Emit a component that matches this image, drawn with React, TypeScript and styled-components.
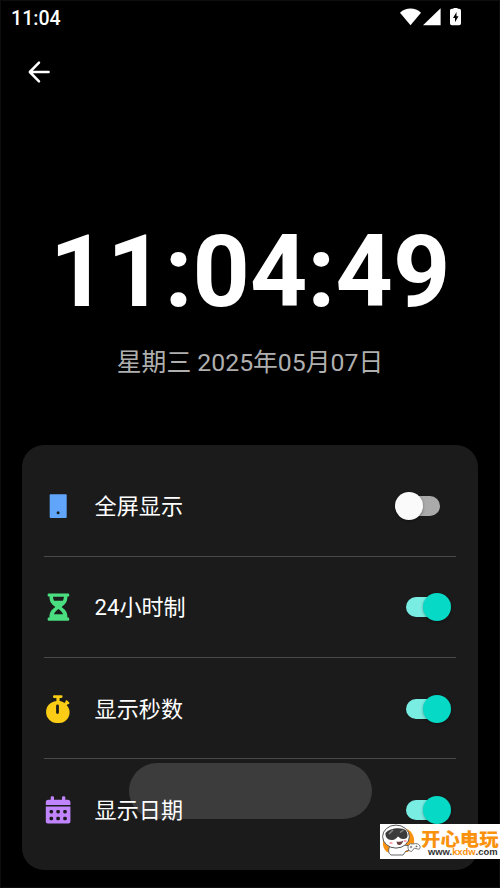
import React, { useState } from "react";
import styled, { createGlobalStyle } from "styled-components";

const GlobalStyle = createGlobalStyle`
  * { box-sizing: border-box; }
  body { margin: 0; background: #000; }
`;

const Screen = styled.main`
  position: relative;
  width: 500px;
  height: 888px;
  overflow: hidden;
  display: flex;
  flex-direction: column;
  box-shadow: inset 0 0 0 1px #0d0d0d;
  background: #000;
  color: #fff;
  font-family: Roboto, "Noto Sans CJK SC", sans-serif;
`;

const StatusBar = styled.header`
  display: flex;
  align-items: center;
  justify-content: space-between;
  height: 34px;
  padding: 1px 38px 0 11px;
`;

const StatusTime = styled.span`
  font-size: 19.6px;
  line-height: 33px;
  padding-top: 1px;
  font-weight: 500;
`;

const StatusIcons = styled.div`
  display: flex;
  height: 19px;
`;

const NavBar = styled.nav`
  display: flex;
  align-items: center;
  height: 76px;
  padding-left: 27px;
`;

const BackButton = styled.button`
  display: flex;
  padding: 0;
  border: 0;
  background: none;
  color: #fff;
`;

const Clock = styled.section`
  display: flex;
  flex-direction: column;
  align-items: center;
  height: 334.5px;
  padding-top: 102px;
`;

const Time = styled.h1`
  margin: 0;
  font-size: 100px;
  line-height: 120px;
  font-weight: 700;
`;

const DateLine = styled.p`
  margin: 13px 0 0;
  font-size: 24.8px;
  line-height: 36px;
  color: #afafaf;
  white-space: nowrap;
`;

const Card = styled.section`
  position: relative;
  isolation: isolate;
  width: 455.5px;
  height: 425.5px;
  margin-left: 22px;
  padding: 11px 22px;
  border-radius: 22px;
  background: #1b1b1b;
`;

const Row = styled.label`
  display: flex;
  align-items: center;
  height: 101.3px;
  padding: 1px 5px 0 0;
  border-bottom: 1.3px solid #4a4a4a;
  &:last-of-type {
    height: 99.5px;
    border-bottom: 0;
  }
`;

const IconSlot = styled.span`
  display: flex;
  justify-content: center;
  width: 28px;
  margin-right: 22.6px;
`;

const Label = styled.span`
  flex: 1;
  font-size: 22.1px;
  line-height: 32px;
`;

const Track = styled.span<{ $on: boolean }>`
  position: relative;
  width: 55.4px;
  height: 28px;
  display: flex;
  align-items: center;
  &::before {
    content: "";
    width: 34px;
    height: 20px;
    margin-left: 11px;
    border-radius: 10px;
    background: ${(p) => (p.$on ? "#7aede2" : "#aaa")};
  }
`;

const Thumb = styled.span<{ $on: boolean }>`
  position: absolute;
  top: 0;
  left: ${(p) => (p.$on ? "27.4px" : "0")};
  width: 28px;
  height: 28px;
  border-radius: 50%;
  background: ${(p) => (p.$on ? "#06d9c5" : "#fafafa")};
  box-shadow: 0 1px 3px rgba(0, 0, 0, 0.35);
`;

const HiddenCheckbox = styled.input`
  position: absolute;
  opacity: 0;
  pointer-events: none;
`;

const Toast = styled.div`
  position: absolute;
  z-index: -1;
  left: 106.5px;
  top: 318.5px;
  width: 243px;
  height: 56px;
  border-radius: 28px;
  background: #3c3c3c;
`;

const Badge = styled.aside`
  position: absolute;
  right: 0;
  bottom: 29px;
  display: flex;
  width: 120px;
  height: 35px;
  background: #fff;
`;

const BadgeText = styled.div`
  display: flex;
  flex-direction: column;
  width: 79px;
`;

const BadgeName = styled.span`
  height: 19px;
  margin-top: 4px;
  font: 900 19.4px/19px "Noto Sans CJK SC", sans-serif;
  color: #f9920e;
  white-space: nowrap;
  transform: scaleY(0.95);
`;

const BadgeUrl = styled.span`
  height: 9px;
  margin-left: 7px;
  font: 700 9.4px/9px "Liberation Sans", sans-serif;
  color: #333;
  white-space: nowrap;
  & b { color: #f9920e; }
`;

const BackIcon = () => (
  <svg width="26" height="26" viewBox="0 0 26 26" fill="none" stroke="currentColor" strokeWidth="2.5" strokeLinecap="round" strokeLinejoin="round">
    <path d="M21.6 13H3M12 3.7 2.8 13 12 22.3" />
  </svg>
);

const SignalIcons = () => (
  <svg width="62" height="19" viewBox="0 0 62 19" fill="#fff">
    <path d="M0 4.7C6-.8 15-.8 21 4.7L10.5 17.2Z" />
    <path d="M40.6.2v17H23Z" />
    <path fillRule="evenodd" d="M53.5-.8h4v1.6H59c1.3 0 2 .7 2 2v12.5c0 1.3-.7 2-2 2h-7c-1.3 0-2-.7-2-2V2.8c0-1.3.7-2 2-2h1.5Zm3 4.8-3.5 6h2v4.2l3.5-6h-2Z" />
  </svg>
);

const PhoneIcon = () => (
  <svg width="28" height="28" viewBox="0 0 28 28">
    <rect x="5.7" y="2.2" width="17" height="23.7" rx="1" fill="#60a5fa" />
    <circle cx="14.1" cy="20.7" r="1.5" fill="#1b1b1b" />
  </svg>
);

const HourglassIcon = () => (
  <svg width="28" height="28" viewBox="0 0 28 28">
    <path fill="#4ade80" fillRule="evenodd" d="M4.7.5h19.5q1 0 1 1v1.2q0 .9-1 .9h-.8c0 5-1.6 7.2-5.8 10.5 4.2 3.2 5.8 5.4 5.8 10.3h.8q1 0 1 1v1.3q0 1-1 1H4.7q-1 0-1-1v-1.3q0-1 1-1h.8c0-4.9 1.6-7.1 5.8-10.3C7.1 10.8 5.5 8.6 5.5 3.6h-.8q-1 0-1-.9V1.5q0-1 1-1ZM9 3.8c.1 1.8.4 2.8 1.1 4h8.7c.7-1.2 1-2.2 1.1-4Zm.9 17.4h9.2c-.9-2.1-2.2-3.5-4.6-5.3-2.4 1.8-3.7 3.2-4.6 5.3Z" />
  </svg>
);

const StopwatchIcon = () => (
  <svg width="28" height="28" viewBox="0 0 28 28">
    <path fill="#facc15" fillRule="evenodd" d="M10.3.2h7.1q1.2 0 1.2 1.4t-1.2 1.5h-1.8v3c2 .3 3.5.9 4.8 1.8l1.2-1.1c-.7-.9.8-2 1.6-1.2l2 1.9c.8.8-.4 2.2-1.4 1.5l-1.1 1.2c1.9 2.1 2.9 4.1 2.9 7 0 3.8-1.3 6.3-4.1 8.5-1.8 1.5-3.6 2.2-5.9 2.2h-3.4c-2.5 0-4.7-1-6.7-2.9-2.2-2.2-3.4-4.4-3.4-7.7 0-6.4 4.3-10.4 10.3-11.2v-3h-2.1Q9 3.1 9 1.6T10.3.2ZM12.1 11q-.1-1.4 1.4-1.4t1.4 1.4v6.6q0 1.4-1.4 1.4t-1.4-1.4Z" />
  </svg>
);

const CalendarIcon = () => (
  <svg width="28" height="28" viewBox="0 0 28 28" fill="#c084fc">
    <path d="M1.8 9V6.2Q1.8 3.7 4.3 3.7h2.4V1.3Q6.7.3 8 .3h.8Q10 .3 10 1.3v2.4h8V1.3q0-1 1.2-1h.8q1.3 0 1.3 1v2.4h2.4q2.7 0 2.7 2.5V9Z" />
    <path fillRule="evenodd" d="M1.8 10.6h24.6v15q0 2-2 2H3.8q-2 0-2-2Z" />
    <g fill="#1b1b1b">
      {[7.3, 14.1, 21].map((x) =>
        [15.7, 22.5].map((y) => <rect key={`${x}-${y}`} x={x - 1.8} y={y - 1.8} width="3.6" height="3.6" rx="1.4" />)
      )}
    </g>
  </svg>
);

const Mascot = () => (
  <svg width="41" height="35" viewBox="0 0 41 35">
    <path d="M23 4c8 1 12 8 11 15l-6 9-16 1-5-1q-5-4-4-11Z" fill="#f9920e" />
    <path d="M10 22c-2 4-2 7 1 9h12l3-4 5-1 1-4-9-1Z" fill="#fff" stroke="#555" strokeWidth=".9" />
    <ellipse cx="16" cy="12.6" rx="13.4" ry="11.5" fill="#fff" stroke="#555" strokeWidth="1" />
    <path d="M5.5 9C9 4 22 2.500 26 6.500c3 5 1.500 8.500-2.500 8.500-3 0-4-1.500-5.500-2.500-2 2-3 3.500-6.500 3.500-4 0-6.500-3-6-7Z" fill="#3b3b3b" />
    <path d="m9 10 4-4M20 8.500l3.500-2.500" stroke="#888" strokeWidth="1.500" />
    <path d="M16.500 17.500q4 1 7-1-2 5-4.500 4.500-2 0-2.500-3.500Z" fill="#6b4040" />
    <path d="M9.500 19h3M24 17h2.500" stroke="#ffa6b3" strokeWidth="1.800" />
    <path d="M28 22q2-3.500 5-2 5-1.500 7 2 .5 4-2.500 3l-3-1-3 3.500q-4-.5-3.500-5.500Z" fill="#fff" stroke="#666" strokeWidth=".9" />
    <path d="M29.800 23h2.500M31 21.800v2.500" stroke="#666" strokeWidth=".8" />
    <circle cx="36.500" cy="22.300" r=".9" fill="#666" />
  </svg>
);

const settings = [
  { label: "全屏显示", icon: <PhoneIcon />, on: false },
  { label: "24小时制", icon: <HourglassIcon />, on: true },
  { label: "显示秒数", icon: <StopwatchIcon />, on: true },
  { label: "显示日期", icon: <CalendarIcon />, on: true },
];

function SettingRow({ label, icon, on }: { label: string; icon: React.ReactNode; on: boolean }) {
  const [checked, setChecked] = useState(on);
  return (
    <Row>
      <IconSlot>{icon}</IconSlot>
      <Label>{label}</Label>
      <Track $on={checked}>
        <HiddenCheckbox type="checkbox" checked={checked} onChange={() => setChecked(!checked)} />
        <Thumb $on={checked} />
      </Track>
    </Row>
  );
}

export default function App() {
  return (
    <>
      <GlobalStyle />
      <Screen>
        <StatusBar>
          <StatusTime>11:04</StatusTime>
          <StatusIcons><SignalIcons /></StatusIcons>
        </StatusBar>
        <NavBar>
          <BackButton aria-label="返回"><BackIcon /></BackButton>
        </NavBar>
        <Clock>
          <Time>11:04:49</Time>
          <DateLine>星期三 2025年05月07日</DateLine>
        </Clock>
        <Card>
          <Toast />
          {settings.map((s) => <SettingRow key={s.label} {...s} />)}
        </Card>
        <Badge>
          <Mascot />
          <BadgeText>
            <BadgeName>开心电玩</BadgeName>
            <BadgeUrl>www.<b>kxdw</b>.com</BadgeUrl>
          </BadgeText>
        </Badge>
      </Screen>
    </>
  );
}
